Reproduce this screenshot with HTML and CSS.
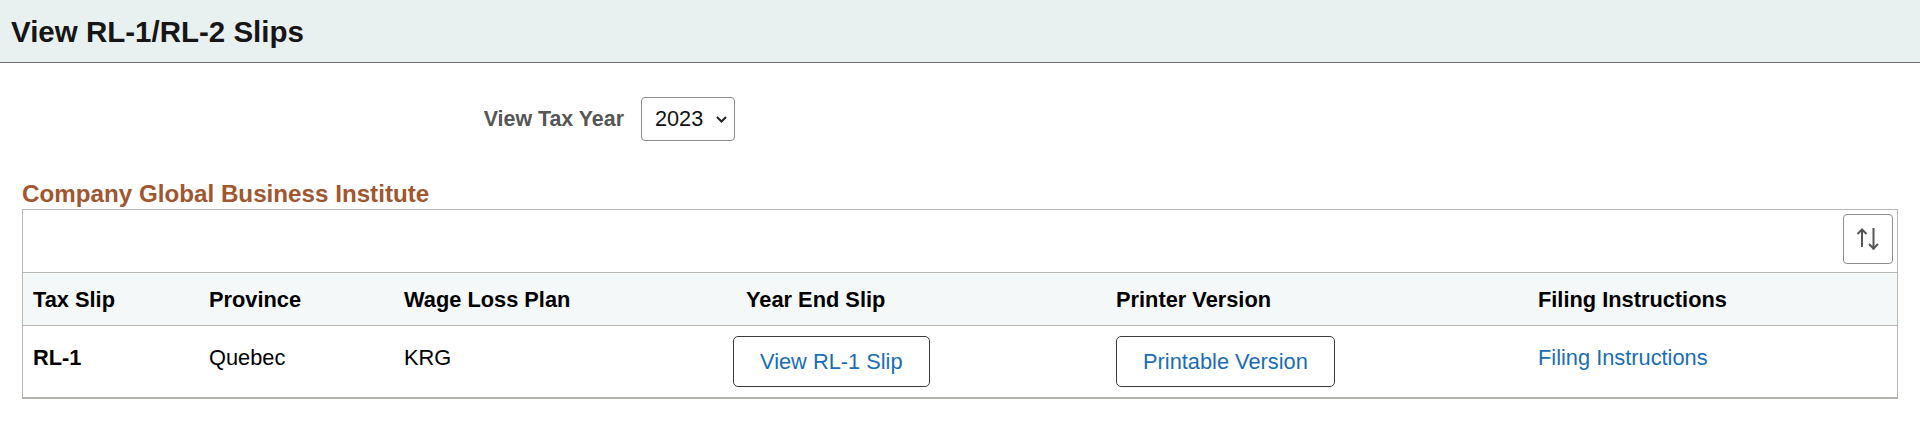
FILE: index.html
```html
<!DOCTYPE html>
<html lang="en">
<head>
<meta charset="utf-8">
<title>View RL-1/RL-2 Slips</title>
<link rel="stylesheet" href="styles.css">
</head>
<body>
<header class="titlebar">
  <h1 class="title">View RL-1/RL-2 Slips</h1>
</header>
<main class="content">
  <div class="filter">
    <label class="filter-label">View Tax Year</label>
    <div class="select" role="combobox" aria-expanded="false">
      <span class="select-value">2023</span>
      <svg class="chevron" width="11" height="7" viewBox="0 0 11 7" aria-hidden="true"><polyline points="1,1 5.5,5.5 10,1" fill="none" stroke="#222" stroke-width="2"/></svg>
    </div>
  </div>
  <h2 class="section-title">Company Global Business Institute</h2>
  <section class="grid">
    <div class="toolbar">
      <button class="sort-btn" aria-label="Sort">
        <svg width="24" height="24" viewBox="0 0 24 24" aria-hidden="true">
          <g fill="none" stroke="#555" stroke-width="2" stroke-linecap="square">
            <line x1="6" y1="3" x2="6" y2="19"/>
            <polyline points="1.5,7 6,2.5 10.5,7" stroke-linecap="butt"/>
            <line x1="17.5" y1="2" x2="17.5" y2="21.5"/>
            <polyline points="13,17 17.5,21.5 22,17" stroke-linecap="butt"/>
          </g>
        </svg>
      </button>
    </div>
    <div class="row head">
      <div class="cell">Tax Slip</div>
      <div class="cell">Province</div>
      <div class="cell">Wage Loss Plan</div>
      <div class="cell cell-shift">Year End Slip</div>
      <div class="cell">Printer Version</div>
      <div class="cell">Filing Instructions</div>
    </div>
    <div class="row data">
      <div class="cell text strong">RL-1</div>
      <div class="cell text">Quebec</div>
      <div class="cell text">KRG</div>
      <div class="cell btn-cell"><button class="btn">View RL-1 Slip</button></div>
      <div class="cell btn-cell"><button class="btn">Printable Version</button></div>
      <div class="cell text"><a class="link" href="#">Filing Instructions</a></div>
    </div>
  </section>
</main>
</body>
</html>
```

FILE: styles.css
```css
html, body {
  margin: 0;
  padding: 0;
  background: #ffffff;
}

body {
  font-family: "Liberation Sans", Arial, sans-serif;
  color: #000;
  width: 1920px;
}

.titlebar {
  height: 62px;
  background: #e8f1f0;
  border-bottom: 1px solid #6f6f6f;
  display: flex;
  align-items: center;
  padding-left: 11px;
}

.title {
  margin: 0;
  font-size: 29.5px;
  font-weight: bold;
  color: #161616;
  line-height: 34px;
  padding-top: 1px;
}

.content {
  padding: 0 22px;
}

.filter {
  display: flex;
  align-items: center;
  gap: 17px;
  margin-top: 34px;
  height: 44px;
}

.filter-label {
  width: 602px;
  text-align: right;
  font-size: 21.4px;
  font-weight: bold;
  color: #565656;
  line-height: 25px;
}

.select {
  box-sizing: border-box;
  width: 94px;
  height: 44px;
  border: 1px solid #8c8c8c;
  border-radius: 4px;
  display: flex;
  align-items: center;
  justify-content: space-between;
  padding: 0 7px 0 13px;
  font-size: 21.7px;
  color: #111;
  background: #fff;
}

.chevron {
  display: block;
}

.section-title {
  margin: 39px 0 1px;
  font-size: 24.2px;
  line-height: 28px;
  font-weight: bold;
  color: #a0572f;
}

.grid {
  border: 1px solid #bbb7b3;
  border-bottom: 2px solid #b6b2ae;
}

.toolbar {
  height: 62px;
  border-bottom: 1px solid #bbb7b3;
  display: flex;
  justify-content: flex-end;
  align-items: flex-start;
}

.sort-btn {
  box-sizing: border-box;
  width: 50px;
  height: 50px;
  margin: 4px 4px 0 0;
  border: 1px solid #8e8e8e;
  border-radius: 4px;
  background: #fff;
  padding: 0;
  display: flex;
  align-items: center;
  justify-content: center;
}

.row {
  display: grid;
  grid-template-columns: 176px 195px 329px 383px 422px 369px;
}

.row.head {
  height: 52px;
  background: #f4f8f9;
  border-bottom: 1px solid #bbb7b3;
  align-items: center;
  font-size: 21.8px;
  font-weight: bold;
  line-height: 25px;
}

.row.data {
  height: 71px;
  align-items: start;
  font-size: 21.8px;
  line-height: 25px;
}

.cell {
  padding-left: 10px;
}

.cell-shift {
  padding-left: 23px;
}

.cell.text {
  padding-top: 19px;
}

.strong {
  font-weight: bold;
}

.cell.btn-cell {
  padding-top: 10px;
}

.btn {
  box-sizing: border-box;
  height: 51px;
  padding: 0 26px;
  border: 1px solid #3c3c3c;
  border-radius: 5px;
  background: #fff;
  font-family: "Liberation Sans", Arial, sans-serif;
  font-size: 21.8px;
  color: #1a6db5;
}

.link {
  color: #1a6db5;
  text-decoration: none;
}
```
